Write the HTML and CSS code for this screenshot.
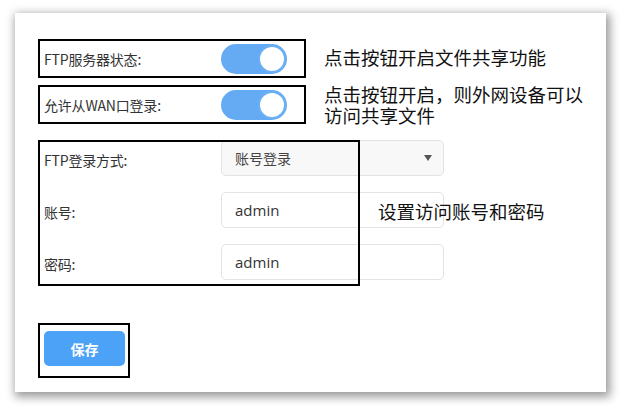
FILE: index.html
```html
<!DOCTYPE html>
<html lang="zh-CN">
<head>
<meta charset="utf-8">
<link rel="stylesheet" href="styles.css">
</head>
<body>
<div class="card">
  <div class="row">
    <div class="hl toggle-row">
      <span class="label">FTP服务器状态:</span>
      <span class="switch"><span class="knob"></span></span>
    </div>
    <div class="note note-one">点击按钮开启文件共享功能</div>
  </div>
  <div class="row row-two">
    <div class="hl toggle-row">
      <span class="label">允许从WAN口登录:</span>
      <span class="switch"><span class="knob"></span></span>
    </div>
    <div class="note note-two">点击按钮开启，则外网设备可以<br>访问共享文件</div>
  </div>
  <div class="fields">
    <div class="field-row">
      <span class="label">FTP登录方式:</span>
      <div class="select"><span>账号登录</span><span class="caret"></span></div>
    </div>
    <div class="field-row">
      <span class="label">账号:</span>
      <div class="input">admin</div>
    </div>
    <div class="field-row">
      <span class="label">密码:</span>
      <div class="input">admin</div>
    </div>
    <div class="note note-three">设置访问账号和密码</div>
  </div>
  <div class="hl save-box">
    <button class="save">保存</button>
  </div>
</div>
</body>
</html>
```

FILE: styles.css
```css
* { box-sizing: border-box; }
html, body { margin: 0; padding: 0; background: #fff; }
body {
  width: 622px;
  height: 406px;
  overflow: hidden;
  font-family: "Noto Sans CJK SC", "Noto Sans", sans-serif;
}
.card {
  margin: 13px 0 0 15px;
  width: 591px;
  height: 379px;
  background: #fff;
  box-shadow: 2px 3px 9px 2px rgba(0, 0, 0, 0.4);
  padding: 26px 0 0 23px;
  display: flex;
  flex-direction: column;
}
.row {
  display: flex;
  align-items: center;
  gap: 18px;
}
.row-two {
  margin-top: 7px;
  align-items: flex-start;
}
.hl {
  border: 2px solid #000;
}
.toggle-row {
  width: 268px;
  height: 39px;
  display: flex;
  align-items: center;
  justify-content: space-between;
  padding: 0 17px 0 4px;
}
.label {
  font-size: 14px;
  color: #333;
  letter-spacing: -0.2px;
  padding-top: 1px;
  white-space: nowrap;
}
.switch {
  width: 66px;
  height: 30px;
  border-radius: 15px;
  background: #65abf4;
  display: flex;
  align-items: center;
  justify-content: flex-end;
  padding-right: 1px;
}
.knob {
  width: 28px;
  height: 28px;
  border-radius: 50%;
  background: #fff;
  border: 2px solid #6cb0f4;
}
.note {
  font-size: 18.5px;
  line-height: 21px;
  color: #111;
  white-space: nowrap;
}
.note-one { margin-top: -3px; }
.note-two { margin-top: -1px; }
.fields {
  position: relative;
  margin-top: 14px;
  width: 322px;
  padding-bottom: 6px;
  display: flex;
  flex-direction: column;
  gap: 16px;
}
.fields::after {
  content: "";
  position: absolute;
  inset: 0;
  border: 2px solid #000;
  pointer-events: none;
  z-index: 1;
}
.field-row {
  display: grid;
  grid-template-columns: 183px 223px;
  align-items: center;
  height: 36px;
}
.field-row .label {
  padding-left: 6px;
  padding-top: 4px;
}
.select, .input {
  height: 36px;
  border: 1px solid #e3e3e3;
  border-radius: 5px;
  padding: 0 11px 0 13px;
  display: flex;
  align-items: center;
  color: #444;
}
.select {
  background: #f8f8f8;
  justify-content: space-between;
  font-size: 14px;
}
.input {
  background: #fff;
  font-size: 15px;
  font-family: "Open Sans", "Noto Sans", sans-serif;
  color: #333;
}
.caret {
  width: 0;
  height: 0;
  border-left: 4px solid transparent;
  border-right: 4px solid transparent;
  border-top: 6px solid #555;
}
.note-three {
  position: absolute;
  left: 340px;
  top: 61px;
  z-index: 2;
}
.save-box {
  margin-top: 37px;
  width: 92px;
  height: 55px;
  padding: 6px 0 0 4px;
}
.save {
  width: 81px;
  height: 35px;
  border: none;
  border-radius: 5px;
  background: #4ba2f7;
  color: #fff;
  font-family: "Noto Sans CJK SC", sans-serif;
  font-size: 14px;
  font-weight: bold;
  padding: 0;
}
```
